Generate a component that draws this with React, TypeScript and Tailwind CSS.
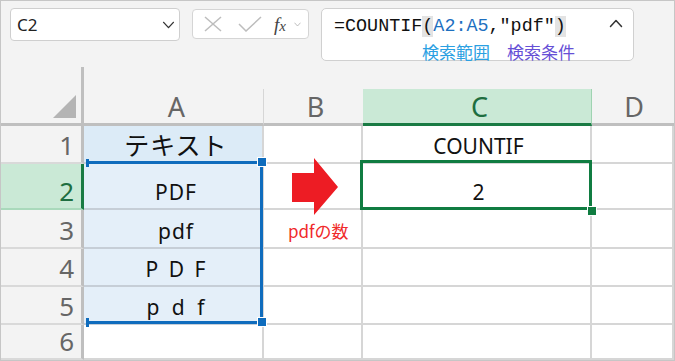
import React from "react";

type Row = {
	n: string;
	h: string;
	a?: string;
	b?: string;
	c?: string;
	aCls: string;
	hdrCls: string;
	cCls: string;
};

const rows: Row[] = [
	{
		n: "1",
		h: "h-[38px]",
		a: "テキスト",
		c: "COUNTIF",
		aCls: "bg-[#dcebf7] border-b-[#c6ced7] text-[25px] pb-[3px] font-['Noto_Sans_CJK_JP',sans-serif]",
		hdrCls: "",
		cCls: "bg-[#fff2cc]",
	},
	{ n: "2", h: "h-[46px]", a: "PDF", c: "2", aCls: "bg-[#e4eff9] border-b-[#c6ced7]", hdrCls: "green", cCls: "" },
	{ n: "3", h: "h-[39px]", a: "pdf", b: "pdfの数", aCls: "bg-[#e4eff9] border-b-[#c6ced7]", hdrCls: "", cCls: "" },
	{ n: "4", h: "h-[38px]", a: "P D F", aCls: "bg-[#e4eff9] border-b-[#c6ced7] [word-spacing:3px]", hdrCls: "", cCls: "" },
	{ n: "5", h: "h-[38px]", a: "p d f", aCls: "bg-[#e4eff9] border-b-[#c6ced7] [word-spacing:5px]", hdrCls: "", cCls: "" },
	{ n: "6", h: "h-[35px]", aCls: "bg-white border-b-[#d6d6d6]", hdrCls: "", cCls: "" },
];

function Chevron({ up = false, className = "" }: { up?: boolean; className?: string }) {
	return (
		<svg viewBox="0 0 14 9" className={className} fill="none" strokeWidth="1.5" strokeLinecap="round" strokeLinejoin="round">
			<polyline points={up ? "1.5,7.5 7,1.5 12.5,7.5" : "1.5,1.5 7,7.5 12.5,1.5"} />
		</svg>
	);
}

export default function App() {
	return (
		<div className="relative w-[675px] h-[361px] overflow-hidden border border-[#c6c6c6] bg-[#f3f3f3] font-['Noto_Sans','Noto_Sans_CJK_JP',sans-serif] flex flex-col">
			{/* Formula bar */}
			<div className="h-[66px] shrink-0 flex items-start pl-[9px] pt-[7px]">
				<div className="w-[170px] h-[33px] bg-white border border-[#cfcfcf] rounded-[4px] flex items-center justify-between pl-[6px] pr-[4px]">
					<span className="text-[17px] text-[#222] pt-[1px]">C2</span>
					<Chevron className="w-[13px] h-[8px] stroke-[#333]" />
				</div>
				<div className="ml-[12px] mt-[1px] w-[117px] h-[30px] bg-white border border-[#d5d5d5] rounded-[4px] flex items-center pl-[11px]">
					<svg viewBox="0 0 18 16" className="w-[18px] h-[16px] stroke-[#bdbdbd]" fill="none" strokeWidth="1.5">
						<line x1="1" y1="1" x2="17" y2="15" />
						<line x1="17" y1="1" x2="1" y2="15" />
					</svg>
					<svg viewBox="0 0 24 16" className="ml-[16px] w-[24px] h-[16px] stroke-[#bdbdbd]" fill="none" strokeWidth="1.5">
						<polyline points="1,8 8,15 23,1" />
					</svg>
					<span className="ml-[12px] font-['Liberation_Serif',serif] italic text-[#444] text-[19px] leading-none">
						f<span className="text-[15px]">x</span>
					</span>
					<Chevron className="ml-[8px] w-[7px] h-[5px] stroke-[#aaa]" />
				</div>
				<div className="ml-[12px] w-[313px] h-[53px] bg-white border border-[#d0d0d0] rounded-[5px] flex items-start pl-[12px] pr-[10px] pt-[9px]">
					<div className="flex-1 flex flex-col">
						<div className="font-['Liberation_Mono',monospace] text-[18.4px] leading-none text-[#111] whitespace-pre">
							=COUNTIF<span className="bg-[#e3e3e3]">(</span>
							<span className="text-[#1d6fbf]">A2:A5</span>,"pdf"<span className="bg-[#e3e3e3]">)</span>
						</div>
						<div className="mt-[7px] pl-[88px] flex gap-[17px] font-['Noto_Sans_CJK_JP',sans-serif] text-[17px] leading-none">
							<span className="text-[#2aa0e2]">検索範囲</span>
							<span className="text-[#6650d6]">検索条件</span>
						</div>
					</div>
					<Chevron up className="mt-[1px] w-[14px] h-[9px] stroke-[#333]" />
				</div>
			</div>

			{/* gap above headers */}
			<div className="h-[22px] shrink-0 flex">
				<div className="w-[83px] h-full border-r-[3px] border-[#bfbfbf]" />
			</div>

			{/* Column headers */}
			<div className="h-[37px] shrink-0 flex text-[27px] leading-none text-[#666]">
				<div className="w-[83px] border-r-[3px] border-b-[3px] border-[#bfbfbf] flex items-end justify-end pr-[5px] pb-[3px]">
					<svg viewBox="0 0 23 23" className="w-[23px] h-[23px] mb-[2px]">
						<polygon points="23,0 23,23 0,23" fill="#b4b4b4" />
					</svg>
				</div>
				<div className="w-[180px] border-r border-r-[#d6d6d6] border-b-[3px] border-b-[#bfbfbf] flex items-end justify-center pl-[6px] pb-[3px]">A</div>
				<div className="w-[99px] border-b-[3px] border-b-[#bfbfbf] flex items-end justify-center pl-[4px] pb-[3px]">B</div>
				<div className="w-[229px] bg-[#cae9d6] text-[#1e6e40] border-r border-r-[#9fd3b1] border-b-[3px] border-b-[#1a7b44] flex items-end justify-center pl-[5px] pb-[3px]">C</div>
				<div className="flex-1 border-b-[3px] border-b-[#bfbfbf] flex items-end justify-center pl-[2px] pb-[3px]">D</div>
			</div>

			{/* Rows */}
			{rows.map((r) => (
				<div key={r.n} className={`${r.h} shrink-0 flex`}>
					<div
						className={`w-[83px] border-r-[3px] border-b-2 flex items-end justify-end pr-[7px] pb-[4px] text-[26px] leading-none ${
							r.hdrCls === "green"
								? "bg-[#cae9d6] text-[#1e6e40] border-r-[#1a7b44] border-b-[#a9d9bb]"
								: "text-[#666] border-r-[#bfbfbf] border-b-[#d9d9d9]"
						}`}
					>
						{r.n}
					</div>
					<div
						className={`w-[180px] border-r-2 border-r-[#d6d6d6] border-b-2 flex items-end justify-center pl-[6px] pb-[5px] text-[21px] leading-none tracking-[1px] text-[#111] ${r.aCls}`}
					>
						{r.a}
					</div>
					<div className="w-[99px] bg-white border-r-2 border-b-2 border-[#d6d6d6] flex items-end pl-[24px] pb-[8px] font-['Noto_Sans_CJK_JP',sans-serif] text-[17px] leading-none text-[#f02a2a]">
						{r.b}
					</div>
					<div className={`w-[229px] bg-white border-r-2 border-b-2 border-[#d6d6d6] flex items-end justify-center pl-[4px] pb-[5px] text-[21px] leading-none text-[#111] ${r.cCls}`}>
						{r.c}
					</div>
					<div className="flex-1 bg-white border-r-2 border-b-2 border-[#d6d6d6]" />
				</div>
			))}

			{/* Red arrow */}
			<svg viewBox="0 0 47 57" className="absolute left-[291px] top-[157px] w-[47px] h-[57px]">
				<polygon points="0,15 22,15 22,0 46,29 22,57 22,44 0,44" fill="#ed1c24" />
			</svg>

			{/* Reference range A2:A5 */}
			<div className="absolute left-[85px] top-[160px] w-[177px] h-[163px] border-t-[3px] border-r-[3px] border-b-[3px] border-[#0f6cbd]" />
			<div className="absolute left-[85px] top-[158px] w-[3px] h-[8px] bg-[#0f6cbd]" />
			<div className="absolute left-[85px] top-[317px] w-[3px] h-[9px] bg-[#0f6cbd]" />
			<div className="absolute left-[256px] top-[156px] w-[10px] h-[10px] bg-[#0f6cbd] border border-white" />
			<div className="absolute left-[256px] top-[316px] w-[10px] h-[10px] bg-[#0f6cbd] border border-white" />

			{/* Active cell C2 */}
			<div className="absolute left-[359px] top-[159px] w-[232px] h-[50px] border-[3px] border-[#107c41]" />
			<div className="absolute left-[586px] top-[205px] w-[10px] h-[10px] bg-[#107c41] border border-white" />
		</div>
	);
}
